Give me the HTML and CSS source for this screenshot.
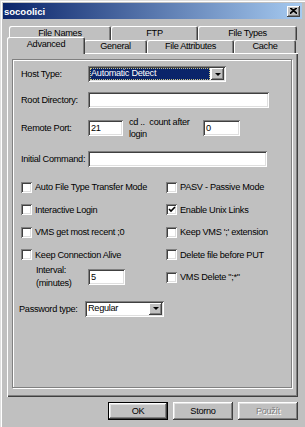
FILE: index.html
```html
<!DOCTYPE html>
<html lang="cs">
<head>
    <meta charset="UTF-8">
    <title>socoolici</title>
    <link rel="stylesheet" href="styles.css">
</head>
<body>
    <div class="window">
        <!-- title bar -->
        <div class="titlebar">
            <span class="title">socoolici</span>
            <span class="close">
                <svg width="7" height="6" viewBox="0 0 7 6"><path d="M0 0 L7 6 M1 0 L7 5.2 M7 0 L0 6 M6 0 L0 5.2" stroke="#000" stroke-width="1.1"/></svg>
            </span>
        </div>

        <!-- tabs -->
        <div class="tabs">
            <div class="tab-row back">
                <div class="tab tab-names">File Names</div>
                <div class="tab tab-ftp">FTP</div>
                <div class="tab tab-types">File Types</div>
            </div>
            <div class="tab-row front">
                <div class="tab tab-advanced active">Advanced</div>
                <div class="tab tab-general">General</div>
                <div class="tab tab-attr">File Attributes</div>
                <div class="tab tab-cache">Cache</div>
            </div>
        </div>

        <!-- tab page -->
        <div class="panel">
            <div class="group">
                <div class="row row-host">
                    <span class="label">Host Type:</span>
                    <div class="combo combo-host">
                        <span class="combo-value selected">Automatic Detect</span>
                        <span class="drop"><span class="arrow"></span></span>
                    </div>
                </div>

                <div class="row row-root">
                    <span class="label">Root Directory:</span>
                    <div class="field field-root"></div>
                </div>

                <div class="row row-port">
                    <span class="label">Remote Port:</span>
                    <div class="field field-port">21</div>
                    <span class="cd-label">cd ..&nbsp; count after<br>login</span>
                    <div class="field field-cd">0</div>
                </div>

                <div class="row row-cmd">
                    <span class="label">Initial Command:</span>
                    <div class="field field-cmd"></div>
                </div>

                <div class="checks">
                    <div class="check"><span class="box"></span>Auto File Type Transfer Mode</div>
                    <div class="check right"><span class="box"></span>PASV - Passive Mode</div>

                    <div class="check"><span class="box"></span>Interactive Login</div>
                    <div class="check right"><span class="box checked"><svg width="8" height="7" viewBox="0 0 8 7"><path d="M1 3 L3 5 L7 1" stroke="#000" stroke-width="1.6" fill="none"/></svg></span>Enable Unix Links</div>

                    <div class="check"><span class="box"></span>VMS get most recent ;0</div>
                    <div class="check right"><span class="box"></span>Keep VMS ';' extension</div>

                    <div class="check"><span class="box"></span>Keep Connection Alive</div>
                    <div class="check right"><span class="box"></span>Delete file before PUT</div>

                    <div class="interval">
                        <span class="interval-label">Interval:<br>(minutes)</span>
                        <div class="field field-interval">5</div>
                    </div>
                    <div class="check right"><span class="box"></span>VMS Delete ";*"</div>
                </div>

                <div class="row row-pass">
                    <span class="label">Password type:</span>
                    <div class="combo combo-pass">
                        <span class="combo-value">Regular</span>
                        <span class="drop"><span class="arrow"></span></span>
                    </div>
                </div>
            </div>
        </div>

        <!-- dialog buttons -->
        <div class="buttons">
            <div class="btn default">OK</div>
            <div class="btn">Storno</div>
            <div class="btn disabled">Použít</div>
        </div>
    </div>
</body>
</html>
```

FILE: styles.css
```css
* {
    margin: 0;
    padding: 0;
    box-sizing: border-box;
}

body {
    width: 305px;
    height: 427px;
    overflow: hidden;
    background: #c0c0c0;
    font-family: "Liberation Sans", Arial, sans-serif;
    font-size: 9.2px;
    letter-spacing: -0.3px;
    color: #000;
}

/* window frame */
.window {
    width: 305px;
    height: 427px;
    background: #c0c0c0;
    padding-top: 3px;
    box-shadow: inset 1px 1px 0 #dfdfdf, inset 2px 2px 0 #fff;
}

.titlebar {
    height: 16px;
    margin-left: 3px;
    margin-right: 3px;
    display: flex;
    align-items: center;
    justify-content: space-between;
    background: linear-gradient(to right, #0a246a, #a6caf0);
    color: #fff;
    padding: 0 2px 0 1px;
}

.title {
    font-weight: bold;
    font-size: 9.5px;
    letter-spacing: 0;
}

.close {
    width: 13px;
    height: 11px;
    background: #c0c0c0;
    display: flex;
    align-items: center;
    justify-content: center;
    box-shadow: inset -1px -1px #404040, inset 1px 1px #fff, inset -2px -2px #808080;
}

/* tabs */
.tabs {
    margin-top: 7px;
}

.tab-row {
    display: flex;
    align-items: flex-end;
}

.tab-row.back {
    height: 14px;
    padding-left: 9px;
}

.tab-row.front {
    height: 13px;
    padding-left: 7px;
}

.tab {
    height: 100%;
    display: flex;
    align-items: center;
    justify-content: center;
    background: #c0c0c0;
    border-radius: 2px 2px 0 0;
    box-shadow: inset 1px 1px 0 #fff, inset -1px 0 0 #404040, inset -2px 0 0 #808080;
    padding-bottom: 1px;
}

.tab-names { width: 102px; }
.tab-ftp { width: 87px; }
.tab-types { width: 99px; }

.tab-advanced { width: 78px; }
.tab-general { width: 63px; }
.tab-attr { width: 87px; }
.tab-cache { width: 62px; }

.tab.active {
    height: 17px;
    margin-bottom: -1px;
    margin-right: -1px;
    position: relative;
    z-index: 2;
    padding-bottom: 3px;
}

/* tab page */
.panel {
    width: 291px;
    height: 344px;
    margin-left: 7px;
    padding: 6px 0 0 5px;
    box-shadow: inset 1px 1px 0 #fff, inset -1px -1px 0 #404040, inset -2px -2px 0 #808080;
}

.group {
    width: 280px;
    height: 329px;
    border: 1px solid #808080;
    box-shadow: 1px 1px 0 #fff, inset 1px 1px 0 #fff;
    padding: 6px 0 0 8px;
}

.row {
    display: flex;
    align-items: center;
}

.label {
    width: 67px;
    flex-shrink: 0;
}

.row-root { margin-top: 10px; }
.row-port { margin-top: 8px; }
.row-cmd { margin-top: 11px; }

/* sunken edit fields */
.field {
    height: 16px;
    background: #fff;
    padding: 3px 0 0 3px;
    line-height: 11px;
    box-shadow: inset 1px 1px #808080, inset -1px -1px #fff, inset 2px 2px #404040, inset -2px -2px #dfdfdf;
}

.field-root { width: 181px; }
.field-cmd { width: 179px; }
.field-port { width: 35px; }
.field-cd { width: 37px; }
.field-interval { width: 37px; }

.cd-label {
    width: 74px;
    margin-left: 6px;
    line-height: 12px;
}

/* combo boxes */
.combo {
    height: 16px;
    background: #fff;
    display: flex;
    align-items: center;
    padding: 2px;
    box-shadow: inset 1px 1px #808080, inset -1px -1px #fff, inset 2px 2px #404040, inset -2px -2px #dfdfdf;
}

.combo-host { width: 138px; }
.combo-pass { width: 79px; }

.combo-value {
    flex: 1;
    height: 12px;
    line-height: 11px;
    padding-left: 1px;
    margin-right: 1px;
}

.combo-value.selected {
    background: #0a246a;
    color: #fff;
    outline: 1px dotted #c8c080;
    outline-offset: -1px;
}

.drop {
    width: 13px;
    height: 12px;
    background: #c0c0c0;
    display: flex;
    align-items: center;
    justify-content: center;
    box-shadow: inset -1px -1px #404040, inset 1px 1px #fff, inset -2px -2px #808080;
}

.arrow {
    width: 0;
    height: 0;
    border-left: 3px solid transparent;
    border-right: 3px solid transparent;
    border-top: 3px solid #000;
}

/* check boxes */
.checks {
    margin-top: 9px;
    display: grid;
    grid-template-columns: 145px 1fr;
    grid-auto-rows: 22.5px;
}

.check {
    display: flex;
    align-items: center;
}

.box {
    width: 11px;
    height: 11px;
    margin-right: 3px;
    background: #fff;
    display: flex;
    align-items: center;
    justify-content: center;
    box-shadow: inset 1px 1px #808080, inset -1px -1px #fff, inset 2px 2px #404040, inset -2px -2px #dfdfdf;
}

.interval {
    display: flex;
    align-items: center;
    padding-left: 15px;
}

.interval-label {
    width: 52px;
    line-height: 13px;
}

.row-pass {
    margin-top: 12px;
    margin-left: -2px;
}

.row-pass .label {
    width: 66px;
}

/* dialog buttons */
.buttons {
    display: flex;
    justify-content: flex-end;
    gap: 5px;
    padding-right: 7px;
    margin-top: 5px;
}

.btn {
    width: 60px;
    height: 18px;
    display: flex;
    align-items: center;
    justify-content: center;
    box-shadow: inset -1px -1px #404040, inset 1px 1px #fff, inset -2px -2px #808080, inset 2px 2px #dfdfdf;
}

.btn.default {
    border: 1px solid #000;
}

.btn.disabled {
    color: #808080;
    text-shadow: 1px 1px 0 #fff;
}
```
